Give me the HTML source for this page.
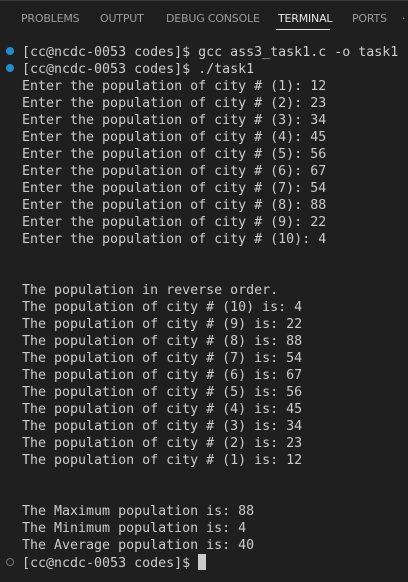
<!DOCTYPE html>
<html><head><style>
html,body{margin:0;padding:0;background:#1f1f1f;width:408px;height:582px;overflow:hidden}
.top{position:absolute;left:0;top:0;width:408px;height:1px;background:#3a3a3a}
.tab{position:absolute;top:12px;font:11px "DejaVu Sans","Liberation Sans",sans-serif;color:#9d9d9d;letter-spacing:-0.2px}
.ul{position:absolute;left:276px;top:29px;width:54px;height:1px;background:#e7e7e7}
pre{position:absolute;left:22px;top:44px;margin:0;font:13.3px/17px "DejaVu Sans Mono",monospace;color:#cccccc}
.dot{position:absolute;left:6px;width:8px;height:8px;border-radius:50%;background:#1c8fd0}
.cur{display:inline-block;width:8px;height:16px;background:#cccccc;vertical-align:-3px}
</style></head><body>
<div class="top"></div>
<div class="tab" style="left:21px">PROBLEMS</div>
<div class="tab" style="left:100px">OUTPUT</div>
<div class="tab" style="left:166px">DEBUG CONSOLE</div>
<div class="tab" style="left:278px;color:#e7e7e7">TERMINAL</div>
<div class="tab" style="left:352px">PORTS</div>
<div class="tab" style="left:402px">·</div>
<div class="ul"></div>
<div class="dot" style="top:47px"></div>
<div class="dot" style="top:64px"></div>
<div class="dot" style="top:558px;background:none;border:1px solid #777;width:6px;height:6px"></div>
<pre>[cc@ncdc-0053 codes]$ gcc ass3_task1.c -o task1
[cc@ncdc-0053 codes]$ ./task1
Enter the population of city # (1): 12
Enter the population of city # (2): 23
Enter the population of city # (3): 34
Enter the population of city # (4): 45
Enter the population of city # (5): 56
Enter the population of city # (6): 67
Enter the population of city # (7): 54
Enter the population of city # (8): 88
Enter the population of city # (9): 22
Enter the population of city # (10): 4


The population in reverse order.
The population of city # (10) is: 4
The population of city # (9) is: 22
The population of city # (8) is: 88
The population of city # (7) is: 54
The population of city # (6) is: 67
The population of city # (5) is: 56
The population of city # (4) is: 45
The population of city # (3) is: 34
The population of city # (2) is: 23
The population of city # (1) is: 12


The Maximum population is: 88
The Minimum population is: 4
The Average population is: 40
[cc@ncdc-0053 codes]$ <span class="cur"></span></pre>
</body></html>
